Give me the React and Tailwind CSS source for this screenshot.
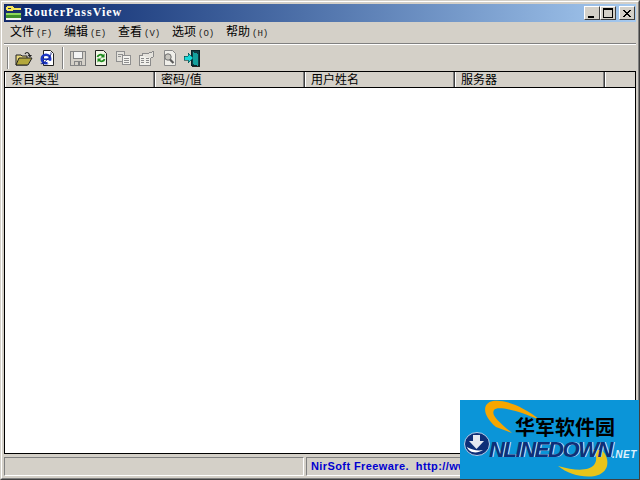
const cjk = "font-['Noto_Sans_CJK_SC','Liberation_Sans',sans-serif]"

const menus = [
  { label: "文件", key: "(F)" },
  { label: "编辑", key: "(E)" },
  { label: "查看", key: "(V)" },
  { label: "选项", key: "(O)" },
  { label: "帮助", key: "(H)" },
]
const columns = [
  { label: "条目类型", width: "w-[150px]" },
  { label: "密码/值", width: "w-[150px]" },
  { label: "用户姓名", width: "w-[150px]" },
  { label: "服务器", width: "w-[150px]" },
]

const AppIcon = () => (
  <svg width="17" height="16" viewBox="0 0 17 16" shapeRendering="crispEdges">
    <rect x="0" y="0" width="17" height="16" fill="#1b2f6b" />
    <rect x="1" y="8" width="15" height="2" fill="#8fd85a" />
    <rect x="1" y="10" width="15" height="3" fill="#3f8f2a" />
    <path d="M2 1h6v1h1v3H8v1H2V5H1V2h1z" fill="#f6e65a" />
    <rect x="3" y="3" width="3" height="1" fill="#1b2f6b" />
    <rect x="9" y="3" width="7" height="2" fill="#f6e65a" />
    <rect x="1" y="13" width="15" height="2" fill="#f4f4f4" />
  </svg>
)

const OpenIcon = () => (
  <svg width="18" height="15" viewBox="0 0 18 15">
    <path d="M1 4h5l1 1h5v9H1z" fill="#e9d87a" stroke="#222" />
    <path d="M1 14l3-7h13l-4 7z" fill="#b4a83c" stroke="#222" />
    <path d="M10 3c1-2 3-2 4 0l.7 1.500" fill="none" stroke="#222" strokeWidth="1.200" />
    <path d="M12.500 4h4.500l-2 2.500z" fill="#222" />
  </svg>
)

const IeIcon = () => (
  <svg width="14" height="16" viewBox="0 0 14 16">
    <path d="M3.500.5h7l3 3v12h-10z" fill="#fff" stroke="#222" />
    <circle cx="6" cy="9" r="4.300" fill="none" stroke="#1c36c4" strokeWidth="2.400" />
    <path d="M1.500 9.200h9" stroke="#1c36c4" strokeWidth="1.600" />
    <path d="M7.500 10.800h4v3h-4z" fill="#fff" />
    <path d="M.8 13.500c1 .8 3-.5 6-3.500s5-6 4-7.500" fill="none" stroke="#0a1a80" strokeWidth="1" />
  </svg>
)

const SaveIcon = () => (
  <svg width="16" height="15" viewBox="0 0 16 15" shapeRendering="crispEdges">
    <path d="M.5.5h15v14H.5z" fill="#d4d0c8" stroke="#858585" />
    <path d="M3.500.5h9v7h-9z" fill="#f4f4f4" stroke="#858585" />
    <path d="M4.500 10.500h7v4h-7z" fill="#d4d0c8" stroke="#858585" />
    <rect x="8" y="11" width="2" height="3" fill="#858585" />
  </svg>
)

const RefreshIcon = () => (
  <svg width="12" height="16" viewBox="0 0 12 16">
    <path d="M.5.5h8l3 3v12H.5z" fill="#f2f6e6" stroke="#222" />
    <path d="M2.500 7c.5-2.500 3.500-3 5.500-1.200M9.500 9c-.5 2.500-3.500 3-5.500 1.200" fill="none" stroke="#1d8a1d" strokeWidth="1.800" />
    <path d="M9.500 3.500v4h-4zM2.500 12.500v-4h4z" fill="#1d8a1d" />
  </svg>
)

const CopyIcon = () => (
  <svg width="15" height="14" viewBox="0 0 15 14" shapeRendering="crispEdges">
    <path d="M.5.5h8v10h-8z" fill="#e4e2dc" stroke="#8f8f8f" />
    <path d="M6.500 4.500h8v9h-8z" fill="#f4f3ef" stroke="#8f8f8f" />
    <path d="M8 7.500h5M8 9.500h5M8 11.500h5" stroke="#8f8f8f" />
    <path d="M2 3.500h5M2 5.500h3" stroke="#8f8f8f" />
  </svg>
)

const PropsIcon = () => (
  <svg width="16" height="15" viewBox="0 0 16 15" shapeRendering="crispEdges">
    <path d="M.5 4.500h11v10H.5z" fill="#f0efea" stroke="#8a8a8a" />
    <path d="M2 7.500h3M2 9.500h3M2 11.500h3M7 7.500h3M7 9.500h3M7 11.500h3" stroke="#8a8a8a" />
    <path d="M3.500 4.500v-2h5l6-2v5l-3 2" fill="#e4e2dc" stroke="#8a8a8a" />
  </svg>
)

const FindIcon = () => (
  <svg width="15" height="16" viewBox="0 0 15 16">
    <path d="M2.500.5h8l3 3v12h-11z" fill="#f0efea" stroke="#8a8a8a" />
    <circle cx="6" cy="7" r="3.200" fill="#c8c6c0" stroke="#6e6e6e" />
    <path d="M8 9.500l3.500 3.500" stroke="#5c5c5c" strokeWidth="2.200" />
  </svg>
)

const ExitIcon = () => (
  <svg width="17" height="17" viewBox="0 0 17 17" shapeRendering="crispEdges">
    <path d="M7.500.5h8v15h-8z" fill="#123c44" stroke="#062428" />
    <path d="M9 2l5 2v12l-5-2z" fill="#14a09c" />
    <path d="M0 6h4V3l5 5-5 5v-3H0z" fill="#19d8d8" stroke="#063c3c" strokeWidth=".6" />
    <rect x="8" y="16" width="8" height="1" fill="#222" />
  </svg>
)

const Separator = () => (
  <div className="w-[2px] h-[22px] border-l border-l-[#808080] border-r border-r-white" />
)

const ToolButton = ({ children }) => (
  <div className="w-[23px] h-[22px] flex items-center justify-center">{children}</div>
)

const CaptionButton = ({ children }) => (
  <div className="w-[16px] h-[14px] bg-[#d4d0c8] border border-t-white border-l-white border-r-[#404040] border-b-[#404040] flex items-center justify-center">
    {children}
  </div>
)

const OnlineDownLogo = () => (
  <div className="absolute right-[-1px] bottom-[-1px] w-[180px] h-[80px] bg-[#0b95d8] overflow-hidden">
    <svg className="absolute inset-0" width="180" height="80" viewBox="0 0 180 80">
      <path d="M80 20C62 5 42-1 33 1 22 3 22 15 36 27L52 33C38 21 31 15 34 10 37 6 54 9 80 20Z" fill="#f7a600" />
      <path d="M98 66C115 71 129 71 134 65 138 60 136 54 133 50L142 50C151 60 149 73 135 76 122 78 108 74 98 66Z" fill="#e8c41a" />
      <ellipse cx="17" cy="44" rx="12.500" ry="11.500" fill="#0e2f78" stroke="#dfefff" strokeWidth=".8" />
      <path d="M7 47c2 6 10 7 16 3-5 1-11 0-16-3z" fill="#fff" />
      <path d="M13 35h7v6h4l-7.500 8-7.500-8h4z" fill="#e4e8f0" />
    </svg>
    <span className={`absolute left-[55px] top-[17px] text-[20px] leading-[20px] text-black font-bold whitespace-nowrap ${cjk}`}>
      华军软件园
    </span>
    <span className="absolute left-[29px] top-[40px] font-['Liberation_Sans',sans-serif] italic font-bold text-[22px] leading-[20px] text-[#0e2f78] tracking-[-1.4px] [text-shadow:1px_0_0_#cfe6f7] whitespace-nowrap">
      NLINEDOWN
    </span>
    <span className="absolute left-[152px] top-[50px] font-['Liberation_Sans',sans-serif] italic font-bold text-[10px] leading-[10px] tracking-[0.5px] text-[#dff1fc] whitespace-nowrap">
      .NET
    </span>
  </div>
)

export default function App() {
  return (
    <div className="relative w-[640px] h-[480px] overflow-hidden bg-[#d4d0c8] border border-t-[#d4d0c8] border-l-[#d4d0c8] border-r-[#404040] border-b-[#404040]">
      <div className="w-full h-full border border-t-white border-l-white border-r-[#808080] border-b-[#808080] p-[2px] flex flex-col">
        <div className="h-[18px] shrink-0 flex items-center justify-between pl-px pr-px bg-gradient-to-r from-[#0a246a] to-[#a6caf0]">
          <div className="flex items-center gap-[2px]">
            <AppIcon />
            <span className="font-['Liberation_Serif',serif] font-bold text-[12px] tracking-[1px] text-white leading-none pb-[2px]">
              RouterPassView
            </span>
          </div>
          <div className="flex items-center">
            <CaptionButton>
              <div className="w-[6px] h-[2px] bg-black mt-[7px] mr-[3px]" />
            </CaptionButton>
            <CaptionButton>
              <div className="w-[10px] h-[10px] border border-black border-t-2" />
            </CaptionButton>
            <div className="w-[3px]" />
            <CaptionButton>
              <svg width="8" height="7" viewBox="0 0 8 7" shapeRendering="crispEdges">
                <path d="M0 0h2v1h1v1h2V1h1V0h2v1H7v1H6v1H5v1h1v1h1v1h1v1H6V6H5V5H3v1H2v1H0V6h1V5h1V4h1V3H2V2H1V1H0z" />
              </svg>
            </CaptionButton>
          </div>
        </div>

        <div className={`h-[19px] shrink-0 mt-px flex items-center pl-[6px] pb-[2px] text-[12px] leading-none text-black ${cjk}`}>
          {menus.map((menu) => (
            <span key={menu.label} className="w-[54px] whitespace-nowrap">
              {menu.label}
              <span className="font-['Liberation_Mono',monospace] text-[9px] ml-[2px] text-[#222]">{menu.key}</span>
            </span>
          ))}
        </div>

        <div className="h-[2px] shrink-0 mt-px border-t border-t-[#808080] border-b border-b-white" />

        <div className="h-[26px] shrink-0 flex items-center pl-[3px]">
          <Separator />
          <div className="w-[3px]" />
          <ToolButton><OpenIcon /></ToolButton>
          <ToolButton><IeIcon /></ToolButton>
          <div className="w-[4px]" />
          <Separator />
          <div className="w-[2px]" />
          <ToolButton><SaveIcon /></ToolButton>
          <ToolButton><RefreshIcon /></ToolButton>
          <ToolButton><CopyIcon /></ToolButton>
          <ToolButton><PropsIcon /></ToolButton>
          <ToolButton><FindIcon /></ToolButton>
          <ToolButton><ExitIcon /></ToolButton>
        </div>

        <div className="flex-1 min-h-0 bg-white border border-black flex flex-col">
          <div className={`h-[16px] shrink-0 flex bg-[#d4d0c8] border-b border-b-black text-[12px] leading-none text-black ${cjk}`}>
            {columns.map((col) => (
              <div
                key={col.label}
                className={`${col.width} flex items-center pl-[6px] pb-[2px] border-r border-r-[#404040] shadow-[inset_-1px_0_0_#808080,inset_1px_0_0_#fff]`}
              >
                {col.label}
              </div>
            ))}
            <div className="flex-1 shadow-[inset_1px_0_0_#fff]" />
          </div>
        </div>

        <div className="h-[19px] shrink-0 mt-[3px] flex gap-[2px]">
          <div className="w-[300px] border border-t-[#808080] border-l-[#808080] border-r-white border-b-white" />
          <div className="flex-1 overflow-hidden border border-t-[#808080] border-l-[#808080] border-r-white border-b-white flex items-center pl-[4px] font-['Liberation_Sans',sans-serif] font-bold text-[11px] tracking-[0.4px] text-[#0000d0] whitespace-nowrap">
            NirSoft Freeware.&nbsp;&nbsp;http://ww
          </div>
        </div>
      </div>
      <OnlineDownLogo />
    </div>
  )
}
